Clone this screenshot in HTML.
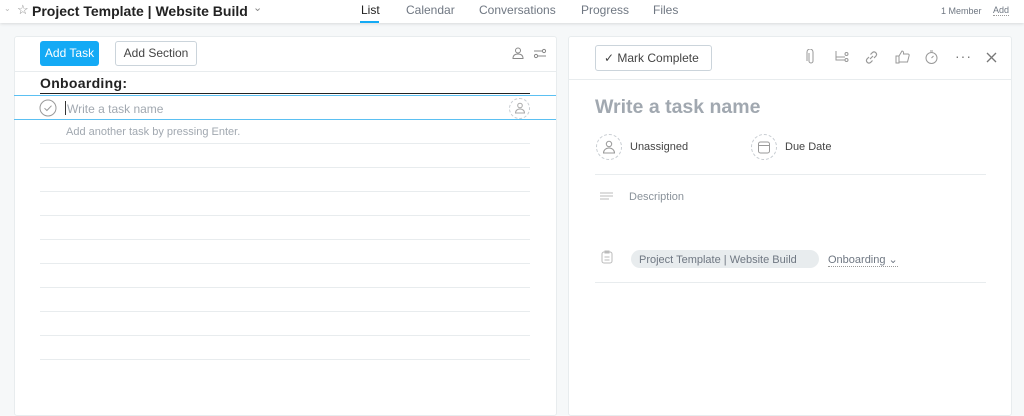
<!DOCTYPE html>
<html><head><style>
*{box-sizing:border-box;margin:0;padding:0}
body{width:1024px;height:404px;overflow:hidden;background:#f6f8f9;font-family:"Liberation Sans",sans-serif;position:relative;color:#222}
.a{position:absolute}
.top{left:0;top:0;width:1024px;height:23px;background:#fff;box-shadow:0 1px 3px rgba(0,0,0,.12)}
.nav{font-size:12px;color:#6f7782;top:3px}
.panel{background:#fff;border:1px solid #e8ecee;border-radius:3px}
.hl{height:1px;background:#e8ecee}
.gray{color:#a1a8b0}
.circ{border:1px dashed #c7ccd1;border-radius:50%}
svg{position:absolute}
</style></head><body>
<div class="a top"></div>
<div class="a" style="left:4px;top:4px;font-size:8px;color:#bbb">⌄</div>
<div class="a" style="left:17px;top:2px;font-size:13px;color:#888">☆</div>
<div class="a" style="left:32px;top:3px;font-size:14px;font-weight:bold;color:#222">Project Template | Website Build</div>
<div class="a" style="left:253px;top:1px;font-size:11px;color:#888">⌄</div>
<div class="a nav" style="left:361px;color:#222">List</div>
<div class="a" style="left:360px;top:21px;width:19px;height:2px;background:#14aaf5"></div>
<div class="a nav" style="left:406px">Calendar</div>
<div class="a nav" style="left:479px">Conversations</div>
<div class="a nav" style="left:581px">Progress</div>
<div class="a nav" style="left:653px">Files</div>
<div class="a" style="left:941px;top:6px;font-size:9px;color:#6f7782">1 Member</div>
<div class="a" style="left:993px;top:5px;font-size:9px;color:#6f7782;border-bottom:1px dotted #999">Add</div>

<div class="a panel" style="left:14px;top:36px;width:543px;height:380px"></div>
<div class="a" style="left:40px;top:41px;width:59px;height:25px;background:#14aaf5;border-radius:3px;color:#fff;font-size:12px;text-align:center;line-height:25px">Add Task</div>
<div class="a" style="left:115px;top:41px;width:82px;height:25px;border:1px solid #cbd4db;border-radius:3px;color:#444;font-size:12px;text-align:center;line-height:23px">Add Section</div>
<svg style="left:512px;top:47px" width="12" height="12" viewBox="0 0 12 12" fill="none" stroke="#888"><circle cx="6" cy="3.5" r="2.5"/><path d="M1 11.5c0-3 2-4.5 5-4.5s5 1.5 5 4.5z"/></svg>
<svg style="left:533px;top:47px" width="14" height="12" viewBox="0 0 14 12" fill="none" stroke="#888"><path d="M1 4h8M5 9h8"/><circle cx="11" cy="4" r="1.6"/><circle cx="3" cy="9" r="1.6"/></svg>
<div class="a hl" style="left:15px;top:71px;width:541px"></div>
<div class="a" style="left:40px;top:75px;font-size:14px;font-weight:bold;color:#222;letter-spacing:.3px">Onboarding:</div>
<div class="a" style="left:40px;top:93px;width:490px;height:1px;background:#222"></div>
<div class="a" style="left:14px;top:95px;width:542px;height:1px;background:#5bc0f2"></div>
<div class="a" style="left:14px;top:119px;width:542px;height:1px;background:#5bc0f2"></div>
<svg style="left:39px;top:99px" width="18" height="18" viewBox="0 0 18 18" fill="none" stroke="#999"><circle cx="9" cy="9" r="8"/><path d="M5.5 9.2l2.4 2.3 4.6-4.8"/></svg>
<div class="a" style="left:65px;top:101px;width:1px;height:14px;background:#333"></div>
<div class="a gray" style="left:67px;top:102px;font-size:12px">Write a task name</div>
<div class="a circ" style="left:509px;top:98px;width:21px;height:21px"></div>
<svg style="left:514px;top:102px" width="12" height="12" viewBox="0 0 12 12" fill="none" stroke="#aaa"><circle cx="6" cy="3.5" r="2.3"/><path d="M1.5 11c0-2.5 2-4 4.5-4s4.5 1.5 4.5 4z"/></svg>
<div class="a gray" style="left:66px;top:126px;font-size:11px">Add another task by pressing Enter.</div>
<div class="a hl" style="left:40px;top:143px;width:490px"></div>
<div class="a hl" style="left:40px;top:167px;width:490px"></div>
<div class="a hl" style="left:40px;top:191px;width:490px"></div>
<div class="a hl" style="left:40px;top:215px;width:490px"></div>
<div class="a hl" style="left:40px;top:239px;width:490px"></div>
<div class="a hl" style="left:40px;top:263px;width:490px"></div>
<div class="a hl" style="left:40px;top:287px;width:490px"></div>
<div class="a hl" style="left:40px;top:311px;width:490px"></div>
<div class="a hl" style="left:40px;top:335px;width:490px"></div>
<div class="a hl" style="left:40px;top:359px;width:490px"></div>

<div class="a panel" style="left:568px;top:36px;width:444px;height:380px"></div>
<div class="a" style="left:595px;top:45px;width:117px;height:26px;border:1px solid #cbd4db;border-radius:3px;font-size:12px;color:#444;line-height:24px;padding-left:8px">✓ Mark Complete</div>
<svg style="left:805px;top:49px" width="12" height="16" viewBox="0 0 12 16" fill="none" stroke="#999"><path d="M4 4v8a2 2 0 004 0V3a3 3 0 00-6 0v9"/></svg>
<svg style="left:835px;top:50px" width="14" height="14" viewBox="0 0 14 14" fill="none" stroke="#999"><path d="M1 1v6h9M1 4v0"/><circle cx="11.5" cy="4" r="1.5"/><circle cx="11.5" cy="10" r="1.5"/><path d="M1 7v3h9"/></svg>
<svg style="left:864px;top:50px" width="15" height="15" viewBox="0 0 15 15" fill="none" stroke="#999" stroke-width="1.2"><path d="M6 9l3-3M5 7L3 9a2.5 2.5 0 003.5 3.5L8.5 10.5M10 8l2-2A2.5 2.5 0 008.5 2.5L6.5 4.5"/></svg>
<svg style="left:895px;top:49px" width="15" height="15" viewBox="0 0 15 15" fill="none" stroke="#999"><path d="M1 7h3v7H1zM4 7l3-5c1 0 2 1 1.5 3H13c1 0 1.5 1 1 2l-1.5 6H4"/></svg>
<svg style="left:924px;top:49px" width="15" height="16" viewBox="0 0 15 16" fill="none" stroke="#999"><circle cx="7.5" cy="9" r="5.5"/><path d="M6 2h3M7.5 9l2-2"/></svg>
<div class="a" style="left:955px;top:48px;font-size:14px;color:#777;letter-spacing:1px">···</div>
<svg style="left:986px;top:52px" width="11" height="11" viewBox="0 0 11 11" stroke="#777" stroke-width="1.3"><path d="M1 1l9 9M10 1l-9 9"/></svg>
<div class="a hl" style="left:569px;top:79px;width:442px"></div>
<div class="a" style="left:595px;top:96px;font-size:19.5px;font-weight:bold;color:#a1a8b0">Write a task name</div>
<div class="a circ" style="left:596px;top:134px;width:26px;height:26px"></div>
<svg style="left:602px;top:140px" width="14" height="14" viewBox="0 0 14 14" fill="none" stroke="#999"><circle cx="7" cy="4" r="2.7"/><path d="M1.5 13c0-3 2.5-5 5.5-5s5.5 2 5.5 5z"/></svg>
<div class="a" style="left:630px;top:141px;font-size:11px;color:#444">Unassigned</div>
<div class="a circ" style="left:751px;top:134px;width:26px;height:26px"></div>
<svg style="left:757px;top:140px" width="14" height="14" viewBox="0 0 14 14" fill="none" stroke="#999"><rect x="1.5" y="2" width="11" height="11" rx="2"/><path d="M1.5 5.5h11"/></svg>
<div class="a" style="left:785px;top:141px;font-size:11px;color:#444">Due Date</div>
<div class="a hl" style="left:595px;top:174px;width:391px"></div>
<svg style="left:600px;top:192px" width="14" height="10" viewBox="0 0 14 10" stroke="#bbb"><path d="M0 1h13M0 4h13M0 7h9"/></svg>
<div class="a" style="left:629px;top:191px;font-size:11px;color:#8a929a">Description</div>
<svg style="left:601px;top:250px" width="12" height="14" viewBox="0 0 12 14" fill="none" stroke="#bbb"><rect x="1" y="2" width="10" height="11" rx="2"/><path d="M4 1h4v2H4zM3.5 7h5M3.5 10h5"/></svg>
<div class="a" style="left:631px;top:250px;width:188px;height:18px;background:#e8ecee;border-radius:9px;font-size:11px;color:#6f7782;line-height:18px;padding-left:8px;padding-top:1px">Project Template | Website Build</div>
<div class="a" style="left:828px;top:253px;font-size:11px;color:#6f7782;border-bottom:1px dotted #999">Onboarding ⌄</div>
<div class="a hl" style="left:595px;top:282px;width:391px"></div>
</body></html>
